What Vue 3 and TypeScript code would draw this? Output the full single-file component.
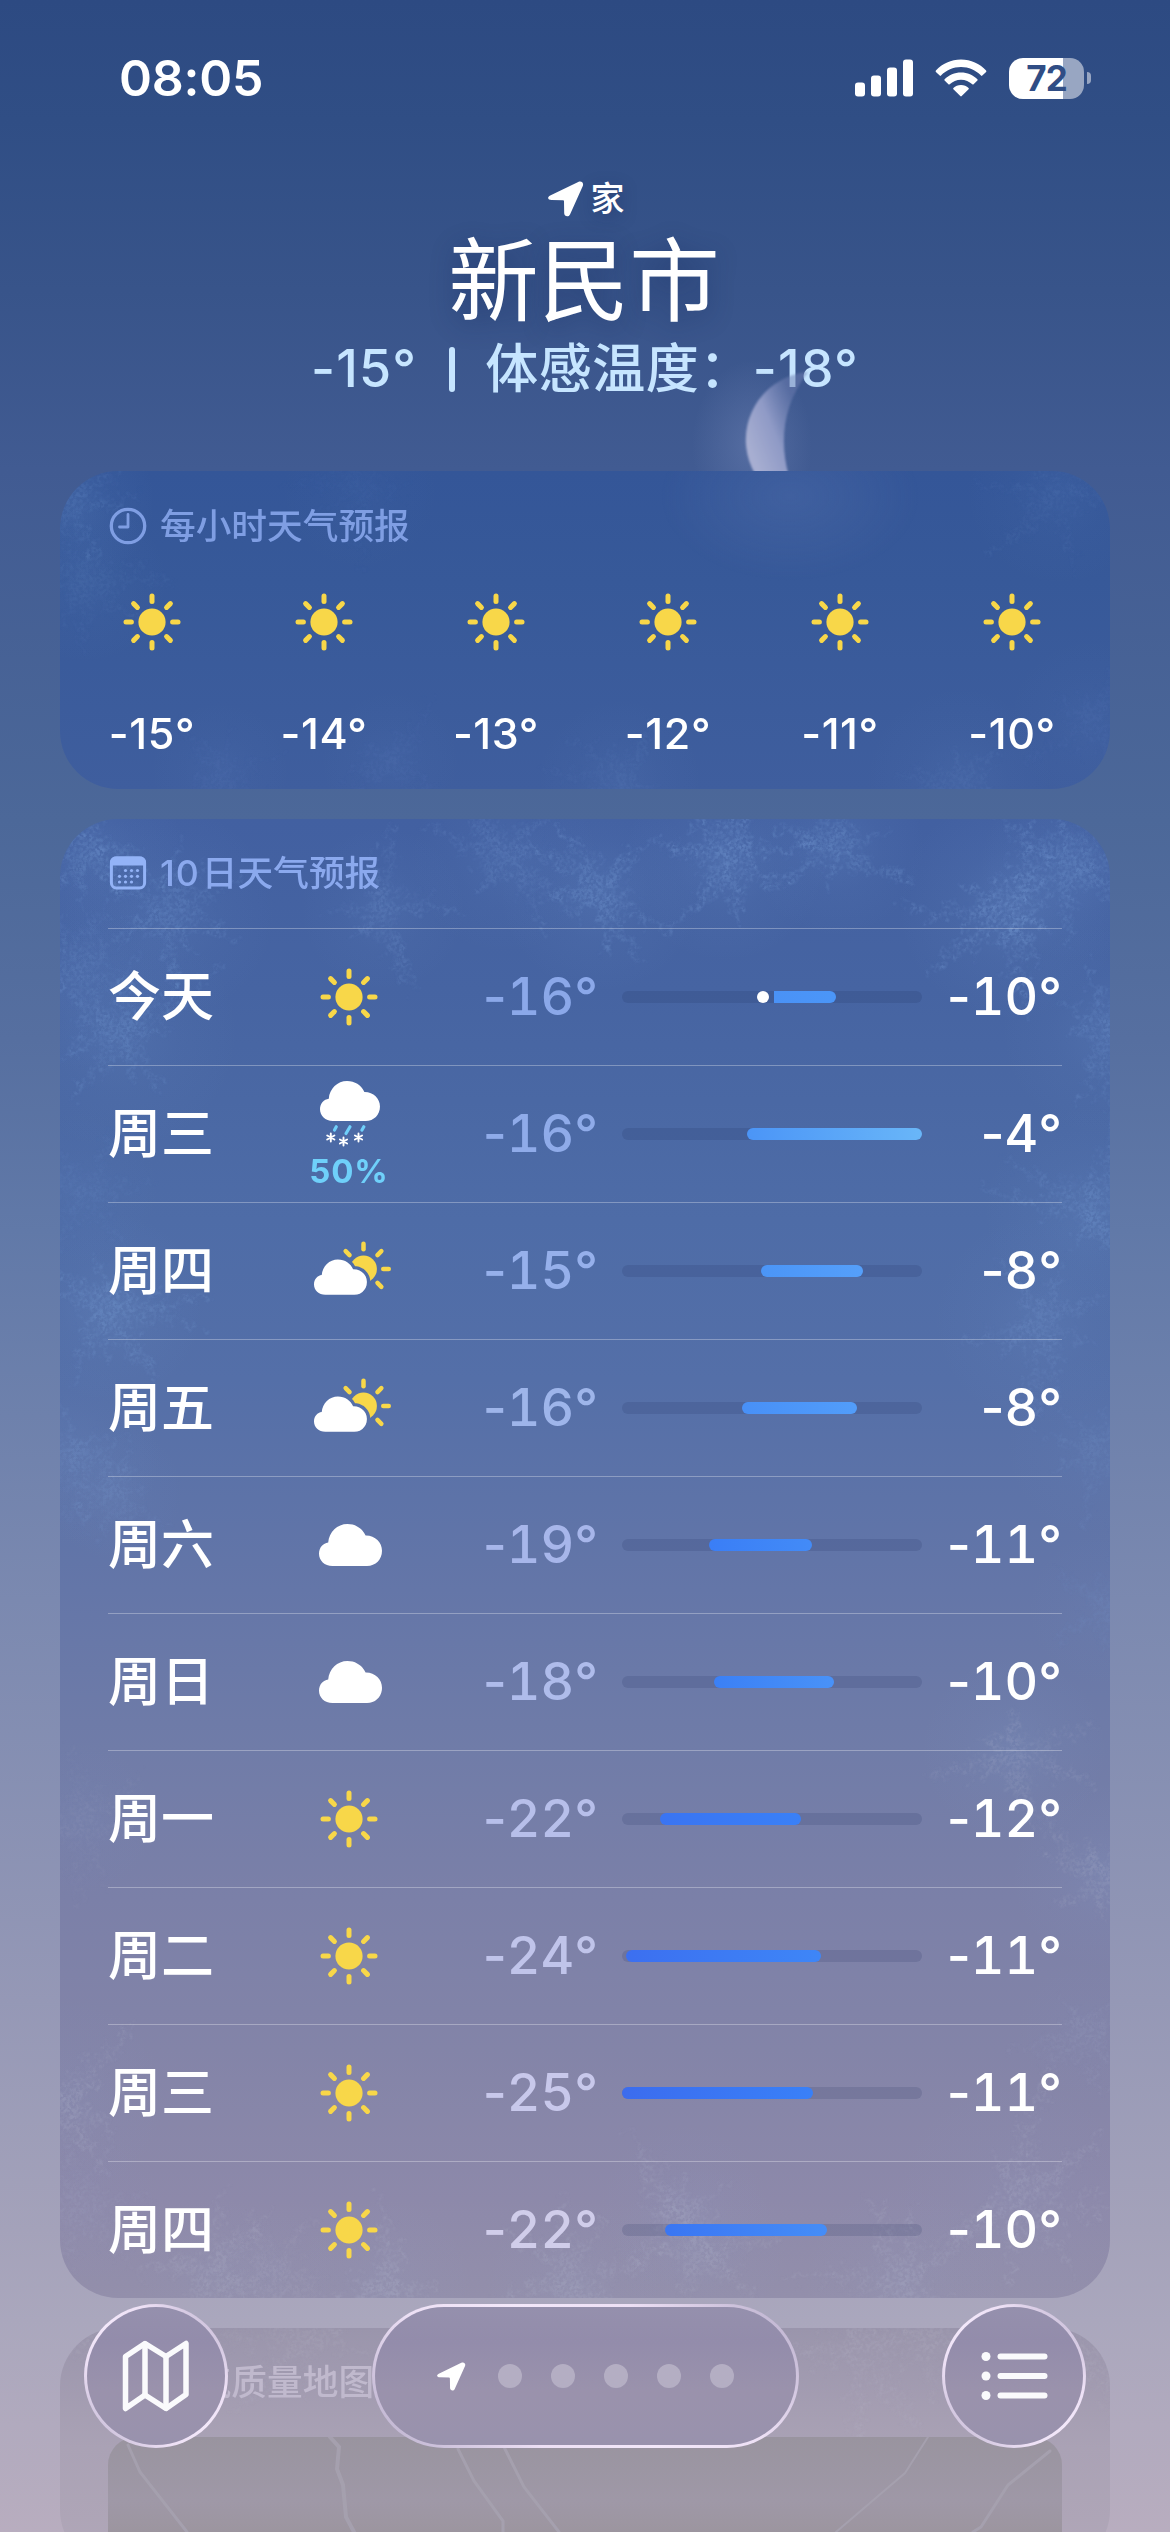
<script setup lang="ts">
type Kind = 'sun' | 'sleet' | 'partly' | 'cloud'

interface Day {
  name: string
  kind: Kind
  chance?: string
  low: string
  high: string
  from: number
  to: number
  lowColor: string
  a: string
  b: string
  now?: number
}

interface Star {
  x: number
  y: number
  r: number
  o: number
}

const hours: string[] = ['-15°', '-14°', '-13°', '-12°', '-11°', '-10°']

const days: Day[] = [
  { name: '今天', kind: 'sun', low: '16°', high: '10°', from: 152, to: 214, lowColor: '#8ba8e9', a: '#4a92f6', b: '#4b96f8', now: 141 },
  { name: '周三', kind: 'sleet', chance: '50%', low: '16°', high: '4°', from: 125, to: 300, lowColor: '#8fabe9', a: '#4b95f7', b: '#69b6f8' },
  { name: '周四', kind: 'partly', low: '15°', high: '8°', from: 139, to: 241, lowColor: '#96b0eb', a: '#4b95f7', b: '#559ffa' },
  { name: '周五', kind: 'partly', low: '16°', high: '8°', from: 120, to: 235, lowColor: '#9eb5ea', a: '#4890f7', b: '#529dfa' },
  { name: '周六', kind: 'cloud', low: '19°', high: '11°', from: 87, to: 190, lowColor: '#a7b6ea', a: '#3a7ef6', b: '#438bf7' },
  { name: '周日', kind: 'cloud', low: '18°', high: '10°', from: 92, to: 212, lowColor: '#afbceb', a: '#3b80f6', b: '#4992f8' },
  { name: '周一', kind: 'sun', low: '22°', high: '12°', from: 38, to: 179, lowColor: '#b7bfea', a: '#3a74f2', b: '#3a80f7' },
  { name: '周二', kind: 'sun', low: '24°', high: '11°', from: 4, to: 199, lowColor: '#c0c4ea', a: '#3c6ff0', b: '#3e86f7' },
  { name: '周三', kind: 'sun', low: '25°', high: '11°', from: 0, to: 191, lowColor: '#c8c8eb', a: '#3c6cee', b: '#3980f8' },
  { name: '周四', kind: 'sun', low: '22°', high: '10°', from: 43, to: 205, lowColor: '#d0cdea', a: '#3a76f3', b: '#458df7' },
]

const pct = (v: number): string => `${(v / 3).toFixed(2)}%`
const rays: number[] = [0, 45, 90, 135, 180, 225, 270, 315]
const partRays: number[] = [-45, 0, 45, 90, 135]

// Frost crystals: jagged strands growing from each centre, with side needles.
function rng(seed: number): () => number {
  let s = seed
  return () => {
    s = (s * 1664525 + 1013904223) % 4294967296
    return s / 4294967296
  }
}

function crystal(star: Star, seed: number): string {
  const rand = rng(seed * 7919 + 17)
  let d = ''
  const arms = 9
  for (let i = 0; i < arms; i++) {
    let angle = (i / arms) * Math.PI * 2 + rand() * 0.6
    const length = star.r * (0.45 + rand() * 0.85)
    let x = star.x
    let y = star.y
    const steps = 12
    for (let k = 0; k < steps; k++) {
      angle += (rand() - 0.5) * 0.35
      const nx = x + (Math.cos(angle) * length) / steps
      const ny = y + (Math.sin(angle) * length) / steps
      d += `M${x.toFixed(1)} ${y.toFixed(1)}L${nx.toFixed(1)} ${ny.toFixed(1)}`
      for (const side of [-1, 1]) {
        const na = angle + side * (0.6 + rand() * 0.5)
        const nl = length * 0.22 * (1 - k / steps) * (0.4 + rand())
        d += `M${nx.toFixed(1)} ${ny.toFixed(1)}l${(Math.cos(na) * nl).toFixed(1)} ${(Math.sin(na) * nl).toFixed(1)}`
      }
      x = nx
      y = ny
    }
  }
  return d
}

const frostTop: Star[] = [
  { x: 12, y: 30, r: 70, o: 0.7 }, { x: 25, y: 110, r: 70, o: 0.4 }, { x: 300, y: 20, r: 70, o: 0.2 },
  { x: 330, y: 290, r: 60, o: 0.3 }, { x: 160, y: 300, r: 60, o: 0.3 }, { x: 560, y: 310, r: 70, o: 0.4 },
  { x: 900, y: 310, r: 80, o: 0.4 }, { x: 1030, y: 250, r: 70, o: 0.3 }, { x: 1000, y: 20, r: 80, o: 0.4 },
]

const frostDays: Star[] = [
  { x: 665, y: 41, r: 85, o: 1 }, { x: 776, y: 28, r: 75, o: 0.8 }, { x: 951, y: 88, r: 95, o: 1 },
  { x: 1015, y: 48, r: 80, o: 0.8 }, { x: 540, y: 72, r: 85, o: 0.9 }, { x: 445, y: 40, r: 80, o: 0.6 },
  { x: 323, y: 90, r: 70, o: 0.6 }, { x: 109, y: 94, r: 90, o: 0.7 }, { x: 30, y: 35, r: 80, o: 0.8 },
  { x: 60, y: 214, r: 100, o: 0.7 }, { x: 1048, y: 211, r: 90, o: 0.7 }, { x: 20, y: 150, r: 90, o: 0.5 },
  { x: 49, y: 488, r: 80, o: 0.8 }, { x: 20, y: 370, r: 70, o: 0.3 }, { x: 10, y: 634, r: 80, o: 0.5 },
  { x: 55, y: 674, r: 60, o: 0.4 }, { x: 1030, y: 394, r: 90, o: 0.7 }, { x: 980, y: 501, r: 90, o: 0.6 },
  { x: 1038, y: 629, r: 80, o: 0.4 }, { x: 954, y: 931, r: 80, o: 0.6 }, { x: 1045, y: 1057, r: 80, o: 0.7 },
  { x: 1045, y: 790, r: 70, o: 0.3 }, { x: 1027, y: 1211, r: 70, o: 0.4 }, { x: 958, y: 1385, r: 110, o: 0.8 },
  { x: 624, y: 1391, r: 80, o: 0.6 }, { x: 154, y: 1454, r: 70, o: 0.7 }, { x: 215, y: 1454, r: 60, o: 0.5 },
  { x: 323, y: 1468, r: 80, o: 0.8 }, { x: 514, y: 1468, r: 80, o: 0.8 }, { x: 640, y: 1431, r: 80, o: 0.7 },
  { x: 843, y: 1464, r: 90, o: 0.8 }, { x: 5, y: 1279, r: 90, o: 0.8 }, { x: 20, y: 1000, r: 70, o: 0.3 },
  { x: 25, y: 1390, r: 80, o: 0.4 },
]

const frostMap: Star[] = [
  { x: 240, y: 10, r: 80, o: 0.5 }, { x: 40, y: 20, r: 80, o: 0.5 }, { x: 800, y: 20, r: 100, o: 0.6 },
  { x: 870, y: 10, r: 80, o: 0.5 }, { x: 1030, y: 30, r: 80, o: 0.5 },
]

const CLOUD = 'M13.5 42C5.5 42 0 36.6 0 29.8C0 23.6 4.2 19.2 9.2 18.6C10 8 18.4 0 28.4 0C37 0 43.6 4.8 46.6 11.6C56 11.4 63 18.4 63 26.8C63 35.6 56.6 42 48 42Z'
const ARROW = 'M2.2 14.6L30.2 1C33.4 -.4 36 1.8 34.8 5L22 33.4C20.6 36.4 16.2 35.6 16.2 32.2L16 20.4C16 19.6 15.6 19.2 14.800 19.2L3.600 19C-.4 19 -1 16.200 2.2 14.6Z'
</script>

<template>
  <div class="screen">
    <svg class="defs" width="0" height="0">
      <defs>
        <filter id="frost" x="0" y="0" width="100%" height="100%">
          <feTurbulence type="fractalNoise" baseFrequency="0.09" numOctaves="3" seed="4" result="warp" />
          <feDisplacementMap in="SourceGraphic" in2="warp" scale="26" xChannelSelector="R" yChannelSelector="G" result="bent" />
          <feGaussianBlur in="bent" stdDeviation="0.8" result="soft" />
          <feTurbulence type="fractalNoise" baseFrequency="0.3" numOctaves="2" seed="9" result="grain" />
          <feColorMatrix in="grain" type="matrix" values="0 0 0 0 1  0 0 0 0 1  0 0 0 0 1  4 0 0 0 -1.4" result="mask" />
          <feComposite in="soft" in2="mask" operator="in" />
        </filter>
        <radialGradient id="haze">
          <stop offset="0" stop-color="#8db4ea" stop-opacity=".3" />
          <stop offset=".5" stop-color="#8db4ea" stop-opacity=".1" />
          <stop offset="1" stop-color="#8db4ea" stop-opacity="0" />
        </radialGradient>
        <linearGradient id="moonFill" gradientUnits="userSpaceOnUse" x1="76" y1="120" x2="130" y2="98">
          <stop offset="0" stop-color="#a7aed1" />
          <stop offset=".5" stop-color="#8f9ac6" />
          <stop offset="1" stop-color="#6f80b3" stop-opacity=".5" />
        </linearGradient>
        <radialGradient id="moonGlow">
          <stop offset="0" stop-color="#8799c9" stop-opacity=".3" />
          <stop offset="1" stop-color="#8799c9" stop-opacity="0" />
        </radialGradient>
        <filter id="moonSoft" x="-20%" y="-20%" width="140%" height="140%"><feGaussianBlur stdDeviation="1.2" /></filter>
        <mask id="behindCloud">
          <rect width="80" height="62" fill="#fff" />
          <path :d="CLOUD" transform="translate(1 19.5) scale(.84)" fill="#000" stroke="#000" stroke-width="8" />
        </mask>
        <symbol id="sun" viewBox="0 0 58 58">
          <circle cx="29" cy="29" r="13.6" fill="#f8d749" />
          <rect v-for="r in rays" :key="r" x="26.5" y=".5" width="5" height="10.4" rx="2.5" fill="#f8d749" :transform="`rotate(${r} 29 29)`" />
        </symbol>
        <symbol id="cloud" viewBox="0 0 63 42"><path :d="CLOUD" fill="#fff" /></symbol>
        <symbol id="arrow" viewBox="0 0 36 36"><path :d="ARROW" fill="#fff" /></symbol>
      </defs>
    </svg>

    <svg class="moon" width="260" height="151" viewBox="0 0 260 151">
      <ellipse cx="82" cy="125" rx="60" ry="85" fill="url(#moonGlow)" />
      <g filter="url(#moonSoft)">
        <path d="M138 52A68 68 0 0 0 89 160L120 160C110 128 110 88 138 52Z" fill="url(#moonFill)" />
      </g>
    </svg>

    <header class="status">
      <span class="time">08:05</span>
      <div class="status-icons">
        <svg width="58" height="38" viewBox="0 0 58 38" fill="#fff">
          <rect x="0" y="23.5" width="10" height="14" rx="3" />
          <rect x="16" y="16.5" width="10" height="21" rx="3" />
          <rect x="32" y="8.5" width="10" height="29" rx="3" />
          <rect x="48" y=".5" width="10" height="37" rx="3" />
        </svg>
        <svg class="wifi" width="52" height="38" viewBox="0 0 52 38" fill="#fff">
          <path d="M.9 11.6C7.4 4.6 16 .6 26 .6S44.600 4.600 51.100 11.600C51.500 12 51.500 12.500 51.100 12.900L47.300 16.600C46.900 17 46.400 17 46 16.600C40.800 11.200 33.800 8.100 26 8.100S11.200 11.200 6 16.600C5.600 17 5.100 17 4.700 16.600L.9 12.900C.5 12.500 .5 12 .9 11.600Z" />
          <path d="M9.600 20.300C13.900 15.900 19.600 13.400 26 13.400S38.100 15.900 42.400 20.300C42.800 20.700 42.800 21.200 42.400 21.600L38.600 25.300C38.200 25.700 37.700 25.600 37.300 25.300C34.300 22.400 30.400 20.700 26 20.700S17.700 22.400 14.700 25.300C14.300 25.600 13.800 25.700 13.400 25.300L9.600 21.600C9.200 21.200 9.200 20.700 9.600 20.300Z" />
          <path d="M18.400 28.900C20.400 27.200 23 26.100 26 26.100S31.600 27.200 33.600 28.900C34 29.300 34 29.800 33.600 30.200L26.700 37.100C26.300 37.500 25.700 37.500 25.300 37.100L18.400 30.200C18 29.800 18 29.300 18.400 28.900Z" />
        </svg>
        <div class="battery"><span>72</span></div>
        <i class="nub"></i>
      </div>
    </header>

    <section class="hero">
      <div class="home"><svg width="36" height="36"><use href="#arrow" /></svg><span>家</span></div>
      <h1>新民市</h1>
      <p class="feels"><span class="num">-15°</span><i class="bar"></i><span class="label">体感温度：</span><span class="num">-18°</span></p>
    </section>

    <main class="cards">
      <section class="card hourly">
        <svg class="frost" width="1050" height="318" viewBox="0 0 1050 318">
          <circle v-for="(s, i) in frostTop" :key="'h' + i" :cx="s.x" :cy="s.y" :r="s.r * 1.2" fill="url(#haze)" :opacity="s.o * 0.6" />
          <g filter="url(#frost)"><path v-for="(s, i) in frostTop" :key="i" :d="crystal(s, i + 3)" fill="none" stroke="#8ab0e8" stroke-width="1.5" :opacity="s.o * 0.2" /></g>
        </svg>
        <div class="moonlight"></div>
        <div class="card-title">
          <svg width="38" height="38" viewBox="0 0 38 38" fill="none" stroke="#7f9ee3" stroke-linecap="round" stroke-linejoin="round">
            <circle cx="19" cy="19" r="16.700" stroke-width="3.300" /><path d="M19 7.500V20H10.500" stroke-width="2.800" />
          </svg>
          <h2>每小时天气预报</h2>
        </div>
        <div class="hours">
          <div v-for="h in hours" :key="h" class="hour">
            <svg width="58" height="58"><use href="#sun" /></svg>
            <span>{{ h }}</span>
          </div>
        </div>
      </section>

      <section class="card daily">
        <svg class="frost" width="1050" height="1479" viewBox="0 0 1050 1479">
          <circle v-for="(s, i) in frostDays" :key="'h' + i" :cx="s.x" :cy="s.y" :r="s.r * 1.2" fill="url(#haze)" :opacity="s.o * (s.y > 1100 ? 0.25 : 0.5)" />
          <g filter="url(#frost)"><path v-for="(s, i) in frostDays" :key="i" :d="crystal(s, i + 20)" fill="none" :stroke="s.y > 850 ? '#b9bcd2' : '#8ab2ea'" stroke-width="1.5" :opacity="s.o * 0.3" /></g>
        </svg>
        <div class="card-title">
          <svg width="38" height="34" viewBox="0 0 38 34">
            <rect x="2.400" y="2" width="33.200" height="30" rx="5" fill="none" stroke="#93b3f7" stroke-width="3" />
            <path d="M1 9.500V6C1 3 3.500 .5 6.500 .5H31.500C34.500 .5 37 3 37 6V9.500Z" fill="#93b3f7" />
            <g fill="#93b3f7">
              <circle cx="16.500" cy="14.500" r="1.600" /><circle cx="22.500" cy="14.500" r="1.600" /><circle cx="28.500" cy="14.500" r="1.600" />
              <circle cx="10.500" cy="20.300" r="1.600" /><circle cx="16.500" cy="20.300" r="1.600" /><circle cx="22.500" cy="20.300" r="1.600" /><circle cx="28.500" cy="20.300" r="1.600" />
              <circle cx="10.500" cy="26" r="1.600" /><circle cx="16.500" cy="26" r="1.600" /><circle cx="22.500" cy="26" r="1.600" />
            </g>
          </svg>
          <h2><b>10</b>日天气预报</h2>
        </div>
        <ul class="days">
          <li v-for="(d, i) in days" :key="i" class="day">
            <span class="name">{{ d.name }}</span>
            <div class="icon">
              <svg v-if="d.kind === 'sun'" width="58" height="58"><use href="#sun" /></svg>
              <svg v-else-if="d.kind === 'cloud'" class="plain" width="63" height="42"><use href="#cloud" /></svg>
              <svg v-else-if="d.kind === 'partly'" class="partly" width="80" height="62" viewBox="0 0 80 62">
                <g fill="#f8d749">
                  <circle cx="50.500" cy="29" r="13.400" mask="url(#behindCloud)" />
                  <rect v-for="r in partRays" :key="r" x="48.250" y="1.500" width="4.500" height="10" rx="2.250" :transform="`rotate(${r} 50.5 29)`" />
                </g>
                <path :d="CLOUD" transform="translate(1 19.5) scale(.84)" fill="#fff" />
              </svg>
              <template v-else>
                <svg class="sleet" width="60" height="67" viewBox="0 0 60 67">
                  <path :d="CLOUD" transform="scale(.952)" fill="#fff" />
                  <g fill="none" stroke="#6fd0fa" stroke-width="3.200" stroke-linecap="round">
                    <path d="M16.300 45.800L14.500 49" /><path d="M30 45.800L26 52.500" /><path d="M43.800 45.800L42 49" />
                  </g>
                  <g stroke="#fff" stroke-width="1.900" stroke-linecap="round">
                    <path v-for="(p, k) in [[10.800, 56.500], [23.500, 60.500], [38.500, 56.500]]" :key="k" :transform="`translate(${p[0]} ${p[1]})`" d="M0 -4V4M-3.600 -2L3.600 2M-3.600 2L3.600 -2" />
                  </g>
                </svg>
                <span class="chance">{{ d.chance }}</span>
              </template>
            </div>
            <span class="low" :style="{ color: d.lowColor }"><span class="minus">-</span>{{ d.low }}</span>
            <div class="track">
              <div class="fill" :class="{ cut: d.now }" :style="{ left: pct(d.from), width: pct(d.to - d.from), background: `linear-gradient(90deg, ${d.a}, ${d.b})` }"></div>
              <i v-if="d.now" class="now" :style="{ left: pct(d.now) }"></i>
            </div>
            <span class="high"><span class="minus">-</span>{{ d.high }}</span>
          </li>
        </ul>
      </section>

      <section class="card air">
        <svg class="frost" width="1050" height="204" viewBox="0 0 1050 204">
          <g filter="url(#frost)"><path v-for="(s, i) in frostMap" :key="i" :d="crystal(s, i + 70)" fill="none" stroke="#c4c0d0" stroke-width="1.500" :opacity="s.o * 0.3" /></g>
        </svg>
        <div class="card-title"><i class="blank"></i><h2>空气质量地图</h2></div>
        <div class="map">
          <svg width="954" height="95" viewBox="0 0 954 95" fill="none" stroke="#a5a0ae" stroke-linecap="round">
            <path d="M20 8L32 35L79 95" stroke-width="3" /><path d="M222 0L231 10L229 32L235 48L238 80L246 95" stroke-width="4" />
            <path d="M350 12L366 44L395 84L395 95" stroke-width="3" /><path d="M395 8L416 50L451 95" stroke-width="3" />
            <path d="M820 0L797 36L728 95" stroke-width="2" /><path d="M942 14L900 48L873 90L865 95" stroke-width="3" />
          </svg>
        </div>
      </section>
    </main>

    <nav class="dock">
      <button class="glass round">
        <svg width="70" height="74" viewBox="0 0 70 74" fill="none" stroke="#fafafc" stroke-width="5.500" stroke-linejoin="round" stroke-linecap="round">
          <path d="M4.500 17.500L24 4.500L45 17.500L65 4.500V55.500L45 69.500L24 56L4.500 69.500Z" /><path d="M24 5V56M45 18V69" />
        </svg>
      </button>
      <div class="glass pages">
        <svg width="29" height="29"><use href="#arrow" /></svg>
        <i v-for="n in 5" :key="n"></i>
      </div>
      <button class="glass round">
        <svg width="68" height="50" viewBox="0 0 68 50" fill="#fafafc">
          <template v-for="y in [5.500, 25, 44.500]" :key="y"><circle cx="6" :cy="y" r="4.500" /><rect x="17.500" :y="y - 3" width="50" height="6" rx="3" /></template>
        </svg>
      </button>
    </nav>
  </div>
</template>

<style>
html,
body {
  margin: 0;
  background: #2e4b83;
}
</style>

<style scoped>
.screen {
  position: relative;
  width: 1170px;
  height: 2532px;
  overflow: hidden;
  color: #fff;
  font-family: Inter, "Noto Sans CJK SC", sans-serif;
  background: linear-gradient(180deg, #2d4a82 0, #304e85 120px, #38548a 290px, #415b92 470px, #4c6899 820px, #566fa0 1040px, #6179a8 1230px, #7b89b0 1600px, #9598b6 2000px, #a4a2ba 2230px, #aaa7bd 2320px, #b8adbf 2532px);
}
h1, h2, p, ul { margin: 0; padding: 0; font-weight: inherit; }
.defs { position: absolute; }
.moon { position: absolute; left: 670px; top: 320px; }

.status {
  display: flex;
  align-items: center;
  justify-content: space-between;
  height: 156px;
  padding: 0 79px 0 119px;
}
.time { font-size: 50px; font-weight: 600; line-height: 60px; letter-spacing: -0.2px; }
.status-icons { display: flex; align-items: center; }
.wifi { margin: 0 22px; }
.battery {
  display: flex;
  align-items: center;
  justify-content: center;
  width: 75px;
  height: 41px;
  border-radius: 14px;
  background: linear-gradient(90deg, #fff 54px, #98a6c2 54px);
}
.battery span { font-size: 35px; font-weight: 700; line-height: 41px; color: #304d85; letter-spacing: -1px; }
.nub { width: 4px; height: 12px; margin-left: 3px; border-radius: 0 4px 4px 0; background: #98a6c2; }

.hero { display: flex; flex-direction: column; align-items: center; box-sizing: border-box; height: 315px; padding-top: 23px; }
.home { display: flex; align-items: center; gap: 7px; height: 40px; margin-left: 2px; font-size: 34px; line-height: 40px; font-weight: 500; text-shadow: 0 4px 16px rgba(20, 40, 90, .4); }
h1 { height: 120px; margin-top: 2px; margin-right: 2px; line-height: 120px; font-size: 90.500px; font-weight: 400; text-shadow: 0 6px 24px rgba(20, 40, 90, .45); }
.feels { display: flex; align-items: center; height: 60px; margin-top: -2px; line-height: 60px; font-size: 53px; font-weight: 500; color: #c6e5ff; }
.feels .num { font-size: 52px; letter-spacing: 1.2px; }
.label { letter-spacing: .5px; }
.bar { width: 6px; height: 45px; margin: 0 30px 0 32px; border-radius: 3px; background: #c6e5ff; }

.cards { display: flex; flex-direction: column; gap: 30px; padding: 0 60px; }
.card { position: relative; overflow: hidden; box-sizing: border-box; border-radius: 58px; padding: 0 48px; }
.frost { position: absolute; left: 0; top: 0; }
.moonlight { position: absolute; left: 600px; top: -60px; width: 260px; height: 170px; background: radial-gradient(closest-side, rgba(130, 150, 200, .15), transparent); }
.card-title { position: relative; display: flex; align-items: center; gap: 13px; margin-left: 1px; color: #7f9ee3; font-size: 35.700px; font-weight: 500; }
.card-title h2 { font-size: 35.700px; line-height: 44px; }
.card-title b { font-weight: 500; letter-spacing: 1px; margin-right: 2px; }
.blank { width: 38px; }

.hourly { height: 318px; background: linear-gradient(180deg, #345698, #375999 35%, #3f5e9e); }
.hourly .card-title { height: 44px; margin-top: 33px; }
.hours { position: relative; display: flex; justify-content: space-between; margin: 45px -10px 0 -16px; }
.hour { display: flex; flex-direction: column; align-items: center; width: 120px; }
.hour svg { display: block; }
.hour span { margin-top: 56px; font-size: 43px; line-height: 52px; font-weight: 500; letter-spacing: .6px; white-space: nowrap; }

.daily { height: 1479px; background: linear-gradient(180deg, #4260a1 0, #4664a2 170px, #4a68a4 281px, #4e6ca7 400px, #546fa8 560px, #6476a8 770px, #707ca8 931px, #7b80a8 1080px, #8384a8 1230px, #8d89aa 1381px, #938fab 1479px); }
.daily .card-title { height: 44px; padding-top: 32px; color: #8ba9ee; }
.days { position: relative; margin-top: 33px; list-style: none; }
.day { display: flex; align-items: center; height: 136px; border-top: 1px solid rgba(255, 255, 255, .3); }
.name { width: 186px; font-size: 53px; line-height: 70px; font-weight: 500; }
.icon { display: flex; flex-direction: column; align-items: center; width: 110px; }
.icon svg { display: block; }
.plain { margin-left: 2px; }
.partly { margin-left: 8px; }
.sleet { margin-left: 2px; }
.chance { margin-top: 7px; font-size: 33px; line-height: 32px; font-weight: 700; letter-spacing: .8px; color: #6fd0fa; }
.low, .high { font-size: 52px; line-height: 60px; font-weight: 500; font-variant-numeric: tabular-nums; text-align: right; white-space: nowrap; }
.minus { font-variant-numeric: normal; }
.low { width: 194px; margin-right: 24px; }
.high { flex: 1; }
.track { position: relative; width: 300px; height: 12px; border-radius: 6px; background: rgba(30, 40, 85, .15); }
.fill { position: absolute; top: 0; height: 12px; border-radius: 6px; }
.fill.cut { border-radius: 0 6px 6px 0; }
.now { position: absolute; top: 0; width: 12px; height: 12px; margin-left: -6px; border-radius: 50%; background: #fff; }

.air { height: 240px; background: linear-gradient(180deg, #9a95ac, #aaa2b5 50%, #b1a7b8); }
.air .card-title { height: 44px; margin-top: 32px; color: #c0b9cd; }
.map { position: relative; height: 160px; margin-top: 33px; border-radius: 28px; overflow: hidden; background: linear-gradient(180deg, #99949f, #9f98a7 40%, #9c959f 95px); }

.dock { position: absolute; left: 84px; right: 84px; bottom: 84px; display: flex; justify-content: space-between; }
.glass {
  display: flex;
  align-items: center;
  justify-content: center;
  box-sizing: border-box;
  height: 144px;
  padding: 0;
  border: 3px solid transparent;
  border-radius: 72px;
  background:
    linear-gradient(180deg, #9590ad 0, #938cab 25%, #9a92ac 60%, #9992ad 100%) padding-box,
    linear-gradient(45deg, #b8aecb 0, #ede0f5 30%, #f3e8fa 50%, #ede0f5 70%, #b8aecb 100%) border-box;
}
.round { width: 144px; }
.pages { width: 427px; gap: 29px; }
.pages svg { margin-right: 3px; }
.pages i { width: 24px; height: 24px; border-radius: 50%; background: #b4aec3; }
</style>
